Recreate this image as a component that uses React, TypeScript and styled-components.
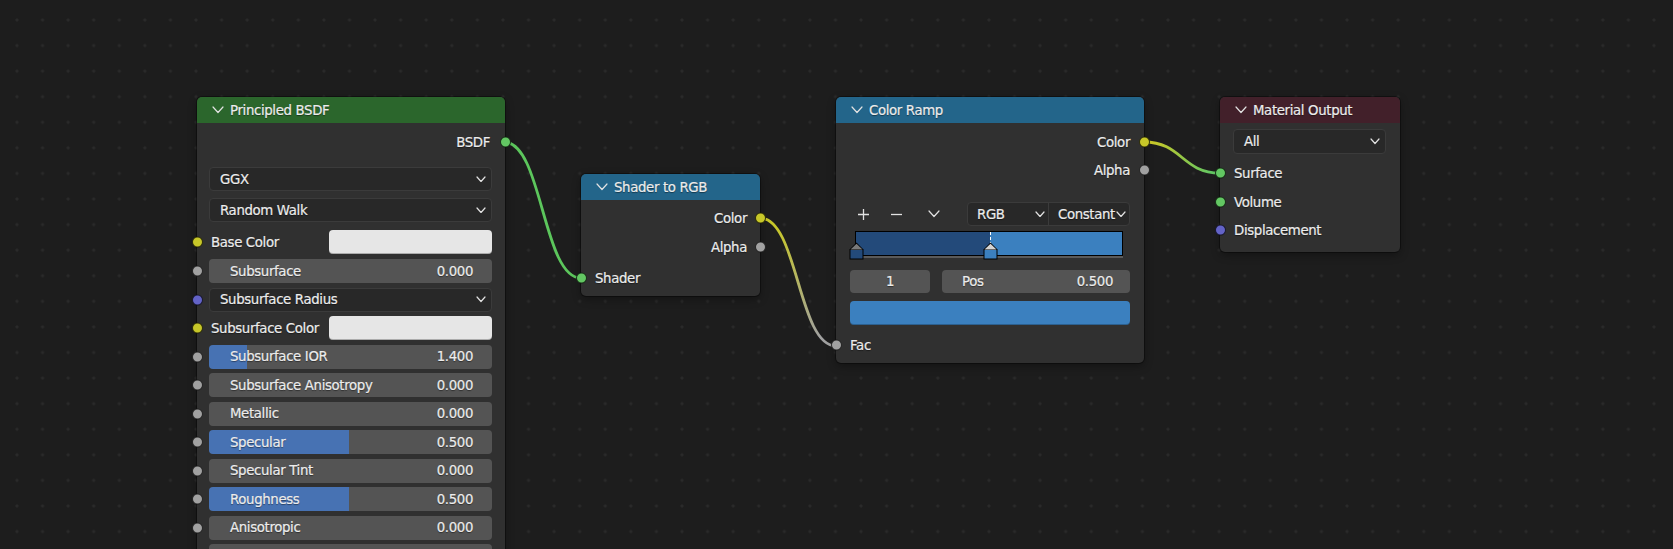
import React from "react"
import styled, { createGlobalStyle } from "styled-components"

const GlobalStyle = createGlobalStyle`
  html, body { margin: 0; padding: 0; background: #1d1d1d; }
  body { font-family: "DejaVu Sans", "Noto Sans", sans-serif; overflow: hidden; }
`

const Canvas = styled.div`
  position: relative;
  width: 1673px;
  height: 549px;
  overflow: hidden;
  background-color: #1d1d1d;
  background-image: radial-gradient(circle, #2a2a2a 1.4px, transparent 1.7px);
  background-size: 25.58px 25.58px;
  background-position: 4.2px 7.2px;
`

const Links = styled.svg`
  position: absolute;
  inset: 0;
  pointer-events: none;
`

const Node = styled.div<{ $x: number; $y: number; $w: number }>`
  position: absolute;
  left: ${p => p.$x}px;
  top: ${p => p.$y}px;
  width: ${p => p.$w}px;
  background: #303030;
  border-radius: 5px;
  box-shadow: 0 0 0 1px rgba(0, 0, 0, 0.35), 0 3px 8px rgba(0, 0, 0, 0.35);
  color: #ececec;
  font-size: 13.3px;
  letter-spacing: -0.35px;
  -webkit-text-stroke: 0.2px currentColor;
  text-shadow: 0 1px 1px rgba(0, 0, 0, 0.45);
`

const Header = styled.div<{ $bg: string }>`
  height: 26px;
  display: flex;
  align-items: center;
  gap: 6px;
  padding-left: 15px;
  background: ${p => p.$bg};
  border-radius: 5px 5px 0 0;
  color: #ececec;
`

const Body = styled.div<{ $pb?: number }>`
  display: flex;
  flex-direction: column;
  padding-bottom: ${p => p.$pb ?? 0}px;
`

const Row = styled.div<{ $mt?: number; $h?: number; $right?: boolean; $pl?: number; $pr?: number }>`
  position: relative;
  display: flex;
  align-items: center;
  height: ${p => p.$h ?? 24}px;
  margin-top: ${p => p.$mt ?? 0}px;
  padding: 0 ${p => p.$pr ?? 13}px 0 ${p => p.$pl ?? 12}px;
  justify-content: ${p => (p.$right ? "flex-end" : "flex-start")};
`

const Stack = styled.div<{ $mt: number }>`
  display: flex;
  flex-direction: column;
  gap: 4.5px;
  margin-top: ${p => p.$mt}px;
`

const Socket = styled.span<{ $color: string; $side: "left" | "right" }>`
  position: absolute;
  top: 50%;
  ${p => p.$side}: -5.5px;
  width: 11px;
  height: 11px;
  box-sizing: border-box;
  border-radius: 50%;
  background: ${p => p.$color};
  border: 1px solid rgba(0, 0, 0, 0.75);
  transform: translateY(-50%);
`

const Label = styled.span<{ $pad?: number }>`
  padding: 0 ${p => p.$pad ?? 2}px;
  white-space: nowrap;
`

const Slider = styled.div<{ $fill: number }>`
  flex: 1;
  height: 100%;
  display: flex;
  align-items: center;
  justify-content: space-between;
  padding: 0 19px 0 21px;
  border-radius: 4px;
  background: linear-gradient(
    to right,
    #4772b3 ${p => p.$fill * 100}%,
    #545454 ${p => p.$fill * 100}%
  );
  white-space: nowrap;
`

const Swatch = styled.div<{ $color: string; $w?: number }>`
  ${p => (p.$w ? `flex: 0 0 ${p.$w}px; margin-left: auto;` : "flex: 1;")}
  height: 100%;
  background: ${p => p.$color};
  border-radius: 4px;
  box-shadow: inset 0 -1px 0 rgba(0, 0, 0, 0.25);
`

const Dropdown = styled.div`
  flex: 1;
  height: 100%;
  box-sizing: border-box;
  display: flex;
  align-items: center;
  justify-content: space-between;
  padding: 0 5px 0 10px;
  background: #282828;
  border: 1px solid #3b3b3b;
  border-radius: 4px;
`

const ToolRow = styled.div`
  display: flex;
  align-items: center;
  height: 24px;
  margin-top: 20px;
  padding: 0 14px;
`

const IconBtn = styled.div<{ $ml?: number }>`
  width: 26px;
  height: 24px;
  display: flex;
  align-items: center;
  justify-content: center;
  margin-left: ${p => p.$ml ?? 0}px;
`

const DropGroup = styled.div`
  margin-left: auto;
  width: 163px;
  height: 24px;
  box-sizing: border-box;
  display: flex;
  background: #282828;
  border: 1px solid #3b3b3b;
  border-radius: 4px;
`

const DropSeg = styled.div<{ $w: number; $divider?: boolean }>`
  width: ${p => p.$w}px;
  display: flex;
  align-items: center;
  justify-content: space-between;
  padding: 0 3px 0 9px;
  box-sizing: border-box;
  border-right: ${p => (p.$divider ? "1px solid #3b3b3b" : "none")};
  white-space: nowrap;
`

const Ramp = styled.div`
  position: relative;
  margin: 5px 21px 0 19px;
  height: 27px;
`

const RampBar = styled.div<{ $split: number }>`
  height: 25px;
  box-sizing: border-box;
  border: 1px solid #000;
  background: linear-gradient(
    to right,
    #234a7a ${p => p.$split}%,
    #3b80bf ${p => p.$split}%
  );
`

const RampBase = styled.div`
  height: 2px;
  background: #5a5a5a;
`

const ActiveLine = styled.div<{ $at: number }>`
  position: absolute;
  top: 1px;
  left: ${p => p.$at}%;
  height: 23px;
  border-left: 1px dashed #ffffff;
`

const Marker = styled.svg<{ $at: number }>`
  position: absolute;
  top: 11px;
  left: calc(${p => p.$at}% - 7px);
`

const FieldRow = styled.div`
  display: flex;
  gap: 12px;
  height: 23px;
  margin-top: 12px;
  padding: 0 14px;
`

const Field = styled.div<{ $w?: number }>`
  ${p => (p.$w ? `flex: 0 0 ${p.$w}px; justify-content: center;` : "flex: 1; justify-content: space-between; padding: 0 17px 0 20px;")}
  display: flex;
  align-items: center;
  background: #545454;
  border-radius: 4px;
`

const SwatchRow = styled.div`
  display: flex;
  height: 24px;
  margin-top: 8px;
  padding: 0 14px;
`

const Chevron = ({ w = 8, h = 4.5, sw = 1.2 }: { w?: number; h?: number; sw?: number }) => (
  <svg width={w + 2} height={h + 2} viewBox={`-1 -1 ${w + 2} ${h + 2}`}>
    <polyline
      points={`0,0 ${w / 2},${h} ${w},0`}
      fill="none"
      stroke="#e2e2e2"
      strokeWidth={sw}
      strokeLinecap="round"
      strokeLinejoin="round"
    />
  </svg>
)

const Plus = () => (
  <svg width="13" height="13" viewBox="0 0 13 13">
    <path d="M6.5 1v11M1 6.5h11" stroke="#e2e2e2" strokeWidth="1.3" />
  </svg>
)

const Minus = () => (
  <svg width="13" height="13" viewBox="0 0 13 13">
    <path d="M1 6.5h11" stroke="#e2e2e2" strokeWidth="1.3" />
  </svg>
)

const StopMarker = ({ at, fill, top }: { at: number; fill: string; top: string }) => (
  <Marker $at={at} width="15" height="18" viewBox="0 0 15 18">
    <path d="M0.5 7.5L7.5 0.5L14.5 7.5V17.5H0.5Z" fill="#000" />
    <path d="M1.5 7.5L7.5 1.8L13.5 7.5Z" fill={top} />
    <rect x="1.5" y="8" width="12" height="8.5" fill={fill} />
  </Marker>
)

const GREEN = "#63c763"
const YELLOW = "#c7c729"
const GRAY = "#a1a1a1"
const PURPLE = "#6363c7"

type Slide = { label: string; value: string; fill: number }

const lowerSliders: Slide[] = [
  { label: "Subsurface IOR", value: "1.400", fill: 0.134 },
  { label: "Subsurface Anisotropy", value: "0.000", fill: 0 },
  { label: "Metallic", value: "0.000", fill: 0 },
  { label: "Specular", value: "0.500", fill: 0.495 },
  { label: "Specular Tint", value: "0.000", fill: 0 },
  { label: "Roughness", value: "0.500", fill: 0.495 },
  { label: "Anisotropic", value: "0.000", fill: 0 },
]

const link = (x1: number, y1: number, x2: number, y2: number) => {
  const h = Math.abs(x2 - x1) * 0.5
  return `M${x1},${y1} C${x1 + h},${y1} ${x2 - h},${y2} ${x2},${y2}`
}

export default function App() {
  return (
    <>
      <GlobalStyle />
      <Canvas>
        <Links width="1673" height="549">
          <defs>
            <linearGradient id="l2" gradientUnits="userSpaceOnUse" x1="760" y1="218" x2="836" y2="346">
              <stop offset="0.1" stopColor={YELLOW} />
              <stop offset="0.9" stopColor={GRAY} />
            </linearGradient>
            <linearGradient id="l3" gradientUnits="userSpaceOnUse" x1="1144" y1="142" x2="1220" y2="173">
              <stop offset="0.1" stopColor={YELLOW} />
              <stop offset="0.9" stopColor={GREEN} />
            </linearGradient>
          </defs>
          <path d={link(504, 142, 581, 278)} stroke="#5cc65c" strokeWidth="2.8" fill="none" />
          <path d={link(760, 218, 836, 346)} stroke="url(#l2)" strokeWidth="2.8" fill="none" />
          <path d={link(1144, 142, 1220, 173)} stroke="url(#l3)" strokeWidth="2.8" fill="none" />
        </Links>

        <Node $x={197} $y={97} $w={308}>
          <Header $bg="#2b662c">
            <Chevron w={10} h={5.5} />
            Principled BSDF
          </Header>
          <Body>
            <Row $mt={7} $right $pr={15}>
              <Label $pad={0}>BSDF</Label>
              <Socket $color={GREEN} $side="right" />
            </Row>
            <Row $mt={13}>
              <Dropdown>
                GGX <Chevron />
              </Dropdown>
            </Row>
            <Row $mt={7}>
              <Dropdown>
                Random Walk <Chevron />
              </Dropdown>
            </Row>
            <Row $mt={8}>
              <Socket $color={YELLOW} $side="left" />
              <Label>Base Color</Label>
              <Swatch $color="#e6e6e6" $w={163} />
            </Row>
            <Stack $mt={5}>
              <Row>
                <Socket $color={GRAY} $side="left" />
                <Slider $fill={0}>
                  <span>Subsurface</span>
                  <span>0.000</span>
                </Slider>
              </Row>
              <Row>
                <Socket $color={PURPLE} $side="left" />
                <Dropdown>
                  Subsurface Radius <Chevron />
                </Dropdown>
              </Row>
              <Row>
                <Socket $color={YELLOW} $side="left" />
                <Label>Subsurface Color</Label>
                <Swatch $color="#e6e6e6" $w={163} />
              </Row>
              {lowerSliders.map(s => (
                <Row key={s.label}>
                  <Socket $color={GRAY} $side="left" />
                  <Slider $fill={s.fill}>
                    <span>{s.label}</span>
                    <span>{s.value}</span>
                  </Slider>
                </Row>
              ))}
              <Row>
                <Socket $color={GRAY} $side="left" />
                <Slider $fill={0} />
              </Row>
            </Stack>
          </Body>
        </Node>

        <Node $x={581} $y={174} $w={179}>
          <Header $bg="#23658a">
            <Chevron w={10} h={5.5} />
            Shader to RGB
          </Header>
          <Body $pb={6}>
            <Row $mt={6} $right>
              <Label $pad={0}>Color</Label>
              <Socket $color={YELLOW} $side="right" />
            </Row>
            <Row $mt={5} $right>
              <Label $pad={0}>Alpha</Label>
              <Socket $color={GRAY} $side="right" />
            </Row>
            <Row $mt={7} $pl={14}>
              <Socket $color={GREEN} $side="left" />
              <Label $pad={0}>Shader</Label>
            </Row>
          </Body>
        </Node>

        <Node $x={836} $y={97} $w={308}>
          <Header $bg="#23658a">
            <Chevron w={10} h={5.5} />
            Color Ramp
          </Header>
          <Body $pb={6}>
            <Row $mt={7} $right $pr={14}>
              <Label $pad={0}>Color</Label>
              <Socket $color={YELLOW} $side="right" />
            </Row>
            <Row $mt={4} $right $pr={14}>
              <Label $pad={0}>Alpha</Label>
              <Socket $color={GRAY} $side="right" />
            </Row>
            <ToolRow>
              <IconBtn>
                <Plus />
              </IconBtn>
              <IconBtn $ml={7}>
                <Minus />
              </IconBtn>
              <IconBtn $ml={12}>
                <Chevron w={10} h={5.5} />
              </IconBtn>
              <DropGroup>
                <DropSeg $w={81} $divider>
                  RGB <Chevron />
                </DropSeg>
                <DropSeg $w={80}>
                  Constant <Chevron />
                </DropSeg>
              </DropGroup>
            </ToolRow>
            <Ramp>
              <RampBar $split={50.4} />
              <RampBase />
              <ActiveLine $at={50.4} />
              <StopMarker at={0.2} fill="#234a7a" top="#7a7a7a" />
              <StopMarker at={50.4} fill="#3b80bf" top="#d4d4d4" />
            </Ramp>
            <FieldRow>
              <Field $w={80}>1</Field>
              <Field>
                <span>Pos</span>
                <span>0.500</span>
              </Field>
            </FieldRow>
            <SwatchRow>
              <Swatch $color="#3b80bf" />
            </SwatchRow>
            <Row $mt={8} $pl={14}>
              <Socket $color={GRAY} $side="left" />
              <Label $pad={0}>Fac</Label>
            </Row>
          </Body>
        </Node>

        <Node $x={1220} $y={97} $w={180}>
          <Header $bg="#42202a">
            <Chevron w={10} h={5.5} />
            Material Output
          </Header>
          <Body $pb={10}>
            <Row $mt={6} $h={25} $pl={13} $pr={14}>
              <Dropdown>
                All <Chevron />
              </Dropdown>
            </Row>
            <Row $mt={7} $pl={14}>
              <Socket $color={GREEN} $side="left" />
              <Label $pad={0}>Surface</Label>
            </Row>
            <Row $mt={5} $pl={14}>
              <Socket $color={GREEN} $side="left" />
              <Label $pad={0}>Volume</Label>
            </Row>
            <Row $mt={4} $pl={14}>
              <Socket $color={PURPLE} $side="left" />
              <Label $pad={0}>Displacement</Label>
            </Row>
          </Body>
        </Node>
      </Canvas>
    </>
  )
}
